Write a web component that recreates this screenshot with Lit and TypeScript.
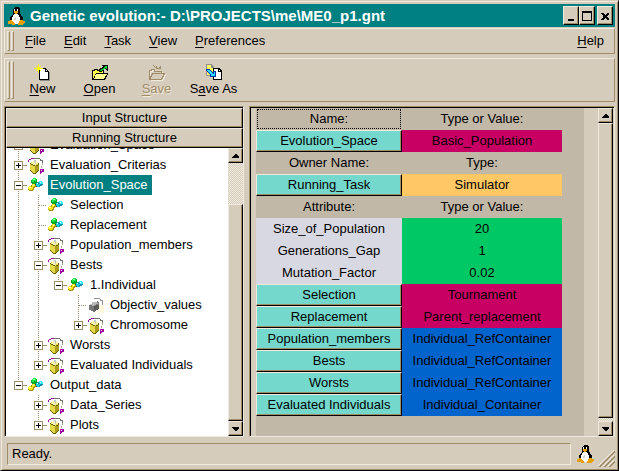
import { LitElement, html, css, svg, nothing } from "lit";
import { customElement, property } from "lit/decorators.js";
import { classMap } from "lit/directives/class-map.js";
import { styleMap } from "lit/directives/style-map.js";

type IconName = "cubes" | "container" | "object" | "new" | "open" | "save" | "saveas" | "penguin";

const prism = (top: string, left: string, right: string, line: string) => svg`
  <path d="M4 5H5V4H9V5H10V6H11V13H10V14H9V15H8V16H5V15H4V14H3V13H2V6H3V5Z" fill="${left}"/>
  <path d="M7 9H8V8H10V7H11V13H10V14H9V15H8V16H7Z" fill="${right}"/>
  <path d="M4 5H5V4H9V5H10V7H8V8H5V7H3V6H4Z" fill="${top}"/>
  <path d="M2 13H3V14H4V15H5V16H8V15H9V14H10V13H11V14H10V15H9V16H8V17H5V16H4V15H3V14H2Z" fill="${line}"/>
  <path d="M2 6H3V7H2ZM3 7H5V8H3ZM5 8H7V9H5ZM8 8H10V9H8ZM10 6H11V8H10Z" fill="${line}"/>`;

const folder = (line: string, back: string, front: string, arrow: string) => svg`
  <path d="M1 16V6H3V5H7V6H13V9H17V10L14 16Z" fill="${line}"/>
  <path d="M2 14V7H4V6H6V7H12V9H5L2 15Z" fill="${back}"/>
  <path d="M5 10H16L13 15H3Z" fill="${front}"/>
  <path d="M8 6V5H9V4H11V3H12V2H11V1H17V7H16V6H15V5H13V6H12V7H11V8H8Z" fill="${line}"/>
  <path d="M9 6H10V5H12V4H13V3H14V2H16V5H15V4H14V5H13V6H11V7H9Z" fill="${arrow}"/>`;

const ICONS: Record<IconName, { w: number; h: number; art: unknown }> = {
  cubes: {
    w: 16, h: 16,
    art: svg`
      <path d="M4 2H5V1H8V2H9V6H8V7H4V6H3V3H4Z" fill="#00a828"/>
      <path d="M4 2H5V1H8V4H6V5H4Z" fill="#18e848"/>
      <path d="M5 2H7V3H5Z" fill="#90ffa0"/>
      <path d="M8 6H9V5H11V4H14V5H15V8H14V9H12V10H9V9H8Z" fill="#1090a8"/>
      <path d="M8 6H10V7H12V8H11V10H9V9H8Z" fill="#18c8e0"/>
      <path d="M11 4H14V5H15V7H12V6H11Z" fill="#38f0ff"/>
      <path d="M12 5H13V6H12ZM9 6H10V7H9Z" fill="#fff"/>
      <path d="M4 7H7V8H8V10H7V11H6V13H5V14H1V13H0V10H1V9H3V8H4Z" fill="#a89400"/>
      <path d="M4 7H7V9H6V10H4Z" fill="#ffe820"/>
      <path d="M1 9H3V10H5V12H4V13H1V12H0V10H1Z" fill="#f8e818"/>
      <path d="M1 10H3V11H1ZM5 8H6V9H5Z" fill="#ffffb0"/>
      <path d="M7 7H8V8H7ZM8 9H9V10H8Z" fill="#403818"/>`,
  },
  container: {
    w: 17, h: 17,
    art: svg`
      <path d="M6 1H12V2H13V3H15V6H14V4H12V2H6Z" fill="#707070"/>
      <path d="M6 2H11V5H14V9H11V5H6Z" fill="#fff"/>
      <path d="M0 3H1V2H3V1H6V2H3V3H1V5H0Z" fill="#900090"/>
      ${prism("#f8f4b0", "#e4d848", "#a89c18", "#686000")}
      <path d="M6 3H8V7H7V5H6Z" fill="#c8c8c8"/>
      <path d="M14 6H15V8H14ZM13 9H14V11H13Z" fill="#b0a890"/>
      <path d="M12 12H16V15H14V16H13V17H12V12ZM13 13V14H14V13Z" fill="#a000a0"/>`,
  },
  object: {
    w: 17, h: 17,
    art: svg`
      <path d="M6 1H12V2H13V3H15V6H14V4H12V2H6Z" fill="#909090"/>
      <path d="M11 8H16V16H9V14H11Z" fill="#fff8dc"/>
      <path d="M4 5H9V4H10V5H11V12H10V13H8V14H7V15H5V14H3V13H1V8H2V7H4Z" fill="#787878"/>
      <path d="M4 5H9V6H10V7H8V8H6V9H4V8H2V7H4Z" fill="#b8b8b8"/>
      <path d="M6 9H8V8H11V12H10V13H8V14H6Z" fill="#585858"/>
      <path d="M14 6H15V8H14Z" fill="#909090"/>`,
  },
  new: {
    w: 18, h: 17,
    art: svg`
      <path d="M5 4H12V5H13V6H14V7H15V16H5Z" fill="#000"/>
      <path d="M6 5H11V8H14V15H6Z" fill="#fff"/>
      <path d="M12 6H13V7H12Z" fill="#fff"/>
      <path d="M15 8H16V17H6V16H15Z" fill="#8a8a8a"/>
      <path d="M4 0H5V4H9V5H5V9H4V5H0V4H4Z" fill="#ff0"/>
      <path d="M2 2H3V3H2ZM6 2H7V3H6ZM2 6H3V7H2ZM6 6H7V7H6ZM3 3H6V6H3Z" fill="#ff0"/>`,
  },
  open: { w: 18, h: 17, art: folder("#000", "#ffff50", "#ffff90", "#00d040") },
  save: {
    w: 18, h: 17,
    art: svg`
      <g fill="none" stroke="#f0eade"><path d="M2.5 15.5V7.5H4.5V6.5H7.5M14.5 7.5V10.5H17.5L14.5 16.5H2.5"/></g>
      <g fill="none" stroke="#a08c68"><path d="M1.5 15.5V6.5H3.5V5.5H6.5V7.5H13.5V9.5M1.5 15.5L4.5 9.5H16.5L13.5 15.5H1.5M5.5 1.5L8.5 4.5V1.5M8.5 4.5H12.5V1.5M9.5 5.5L12.5 2.5"/></g>`,
  },
  saveas: {
    w: 18, h: 17,
    art: svg`
      <path d="M1 0H6L9 3V12H1Z" fill="#909090"/>
      <path d="M2 1H6V4H8V11H2Z" fill="#ffff60"/>
      <path d="M8 4H14L17 7V16H8Z" fill="#000"/>
      <path d="M9 5H13V8H16V15H9Z" fill="#fff"/>
      <path d="M14 6H15V7H14Z" fill="#fff"/>
      <path d="M1 5H4L8 9V7H11V13H5V11H6L1 7Z" fill="#0030a8"/>
      <path d="M2 6H4L8 10H9V8H10V12H6V11H7L2 7Z" fill="#30d8ff"/>`,
  },
  penguin: {
    w: 17, h: 20,
    art: svg`
      <path d="M6 2L7 1H10L12 3V7L15 12V16L12 18H5L2 16V12L5 8V3Z" fill="#000"/>
      <path d="M6 8H10L12 12V16L10 18H7L4 15V12Z" fill="#fff"/>
      <path d="M7 11H8V14H6V12Z" fill="#d4d4d4"/>
      <path d="M6 3H7V5H6ZM9 3H10V5H9Z" fill="#fff"/>
      <path d="M6 5H10V7H9V8H7V7H6Z" fill="#e8a000"/>
      <path d="M0 15H2V14H4L7 18V19H4V18H0Z" fill="#e8a000"/>
      <path d="M10 18L12 14H15V15H17V17L14 19H10Z" fill="#e8a000"/>`,
  },
};

@customElement("pixel-icon")
class PixelIcon extends LitElement {
  @property() name: IconName = "cubes";

  static styles = css`
    :host { display: block; flex: none; }
    svg { display: block; shape-rendering: crispEdges; }
  `;

  render() {
    const { w, h, art } = ICONS[this.name];
    return html`<svg width=${w} height=${h} viewBox="0 0 ${w} ${h}" aria-hidden="true">${art}</svg>`;
  }
}

@customElement("scroll-strip")
class ScrollStrip extends LitElement {
  @property({ type: Number }) before = 0;
  @property({ type: Number }) thumb = 1;
  @property({ type: Number }) after = 0;

  static styles = css`
    :host { display: flex; flex-direction: column; flex: none; width: 15px; }
    .arrow, .thumb {
      box-sizing: border-box;
      width: 15px;
      background: #d6ccbc;
      border: 1px solid;
      border-color: #f0eade #000 #000 #f0eade;
      box-shadow: inset -1px -1px #a08c68;
    }
    .arrow { height: 15px; padding: 0; display: grid; place-items: center; flex: none; }
    .arrow svg { display: block; shape-rendering: crispEdges; }
    .track { background: repeating-conic-gradient(#f0eade 0 25%, #d6ccbc 0 50%) 0 0 / 2px 2px; }
  `;

  render() {
    const grow = (n: number) => styleMap({ flex: `${n} 1 0` });
    return html`
      <button class="arrow" aria-label="Scroll up"><svg width="7" height="4"><path d="M3 0H4L7 3V4H0V3Z"/></svg></button>
      <div class="track" style=${grow(this.before)}></div>
      <div class="thumb" style=${grow(this.thumb)}></div>
      <div class="track" style=${grow(this.after)}></div>
      <button class="arrow" aria-label="Scroll down"><svg width="7" height="4"><path d="M0 0H7V1L4 4H3L0 1Z"/></svg></button>
    `;
  }
}

interface TreeNode {
  label: string;
  icon: IconName;
  closed?: boolean;
  selected?: boolean;
  children?: TreeNode[];
}

const TREE: TreeNode[] = [
  { label: "Evaluation_Space", icon: "container", closed: true },
  { label: "Evaluation_Criterias", icon: "container", closed: true },
  {
    label: "Evolution_Space", icon: "cubes", selected: true,
    children: [
      { label: "Selection", icon: "cubes" },
      { label: "Replacement", icon: "cubes" },
      { label: "Population_members", icon: "container", closed: true },
      {
        label: "Bests", icon: "container",
        children: [
          {
            label: "1.Individual", icon: "cubes",
            children: [
              { label: "Objectiv_values", icon: "object" },
              { label: "Chromosome", icon: "container", closed: true },
            ],
          },
        ],
      },
      { label: "Worsts", icon: "container", closed: true },
      { label: "Evaluated Individuals", icon: "container", closed: true },
    ],
  },
  {
    label: "Output_data", icon: "cubes",
    children: [
      { label: "Data_Series", icon: "container", closed: true },
      { label: "Plots", icon: "container", closed: true },
    ],
  },
];

@customElement("structure-tree")
class StructureTree extends LitElement {
  static styles = css`
    :host { display: block; flex: 1; min-width: 0; overflow: hidden; background: #fff; }
    .scrolled { margin: -13px 0 0; padding: 0 0 0 2px; }
    ul { list-style: none; margin: 0; padding: 0; }
    .row { display: flex; align-items: center; height: 20px; }
    .cell {
      flex: none;
      width: 20px;
      height: 20px;
      display: flex;
      align-items: center;
      background-repeat: no-repeat;
    }
    .line { background-image: repeating-linear-gradient(#a08c68 0 1px, #fff 1px 2px); background-size: 1px 100%; background-position: 10px 0; }
    .last { background-size: 1px 10px; }
    .cell.stub::after {
      content: "";
      width: 8px;
      height: 1px;
      margin-left: 11px;
      background: repeating-linear-gradient(90deg, #a08c68 0 1px, #fff 1px 2px);
    }
    .cell.fold::after { content: ""; width: 4px; height: 1px; background: #a08c68; }
    .box {
      box-sizing: border-box;
      width: 9px;
      height: 9px;
      padding: 0;
      margin-left: 6px;
      border: 1px solid #a08c68;
      background:
        linear-gradient(#000, #000) center / 5px 1px no-repeat,
        #fff;
    }
    .box.closed {
      background:
        linear-gradient(#000, #000) center / 5px 1px no-repeat,
        linear-gradient(#000, #000) center / 1px 5px no-repeat,
        #fff;
    }
    pixel-icon { width: 20px; }
    .label { line-height: 20px; padding: 0 4px 0 2px; white-space: nowrap; }
    .label.selected { background: #008080; color: #fff; }
  `;

  private branch(nodes: TreeNode[], trail: boolean[]): unknown {
    return nodes.map((node, i) => {
      const last = i === nodes.length - 1;
      const expandable = !!node.children || !!node.closed;
      return html`
        <li role="treeitem" aria-expanded=${expandable ? String(!node.closed) : nothing}>
          <div class="row">
            ${trail.map((on) => html`<span class="cell ${classMap({ line: on })}"></span>`)}
            <span class="cell line ${classMap({ last, stub: !expandable, fold: expandable })}">
              ${expandable
                ? html`<button class="box ${classMap({ closed: !!node.closed })}" aria-label="Toggle ${node.label}"></button>`
                : nothing}
            </span>
            <pixel-icon name=${node.icon}></pixel-icon>
            <span class="label ${classMap({ selected: !!node.selected })}">${node.label}</span>
          </div>
          ${node.children ? html`<ul role="group">${this.branch(node.children, [...trail, !last])}</ul>` : nothing}
        </li>`;
    });
  }

  render() {
    return html`<ul class="scrolled" role="tree">${this.branch(TREE, [])}</ul>`;
  }
}

type Kind = "head" | "link" | "plain";
interface Row { kind: Kind; name: string; value: string; tone?: string; focus?: boolean }

const ROWS: Row[] = [
  { kind: "head", name: "Name:", value: "Type or Value:", focus: true },
  { kind: "link", name: "Evolution_Space", value: "Basic_Population", tone: "magenta" },
  { kind: "head", name: "Owner Name:", value: "Type:" },
  { kind: "link", name: "Running_Task", value: "Simulator", tone: "orange" },
  { kind: "head", name: "Attribute:", value: "Type or Value:" },
  { kind: "plain", name: "Size_of_Population", value: "20", tone: "green" },
  { kind: "plain", name: "Generations_Gap", value: "1", tone: "green" },
  { kind: "plain", name: "Mutation_Factor", value: "0.02", tone: "green" },
  { kind: "link", name: "Selection", value: "Tournament", tone: "magenta" },
  { kind: "link", name: "Replacement", value: "Parent_replacement", tone: "magenta" },
  { kind: "link", name: "Population_members", value: "Individual_RefContainer", tone: "blue" },
  { kind: "link", name: "Bests", value: "Individual_RefContainer", tone: "blue" },
  { kind: "link", name: "Worsts", value: "Individual_RefContainer", tone: "blue" },
  { kind: "link", name: "Evaluated Individuals", value: "Individual_Container", tone: "blue" },
];

@customElement("attribute-sheet")
class AttributeSheet extends LitElement {
  static styles = css`
    :host { display: block; flex: 1; min-width: 0; background: #c2b8a8; }
    table { border-collapse: collapse; table-layout: fixed; width: 306px; }
    .names { width: 146px; }
    th, td { height: 22px; padding: 0; font-weight: normal; text-align: center; white-space: nowrap; line-height: 20px; }
    .focus { outline: 1px dotted #000; outline-offset: -2px; }
    .plain { background: #d8d8e2; }
    .magenta { background: #c80064; }
    .orange { background: #ffc864; }
    .green { background: #00c864; }
    .blue { background: #0064cc; }
    .link {
      display: block;
      box-sizing: border-box;
      width: 100%;
      height: 22px;
      padding: 0;
      font: inherit;
      line-height: 20px;
      color: #000;
      background: #74d8cc;
      border: 1px solid;
      border-color: #f0eade #000 #000 #f0eade;
      box-shadow: inset -1px -1px #a08c68;
    }
  `;

  render() {
    return html`
      <table>
        <colgroup><col class="names"><col></colgroup>
        ${ROWS.map((r) =>
          r.kind === "head"
            ? html`<tr><th scope="col" class=${classMap({ focus: !!r.focus })}>${r.name}</th><th scope="col">${r.value}</th></tr>`
            : html`<tr>
                <th scope="row" class=${classMap({ plain: r.kind === "plain" })}>
                  ${r.kind === "link" ? html`<button class="link">${r.name}</button>` : r.name}
                </th>
                <td class=${r.tone ?? ""}>${r.value}</td>
              </tr>`
        )}
      </table>`;
  }
}

/** Splits a caption around its accelerator letter and underlines it. */
const accel = (text: string, at = 0) =>
  html`${text.slice(0, at)}<span class="accel">${text[at]}</span>${text.slice(at + 1)}`;

@customElement("app-root")
class AppRoot extends LitElement {
  static styles = css`
    :host { display: block; font: 13px "Liberation Sans", Arial, sans-serif; color: #000; }
    button { font: inherit; color: inherit; }
    .window {
      box-sizing: border-box;
      min-height: 100vh;
      display: flex;
      flex-direction: column;
      padding: 3px;
      background: #d6ccbc;
      border: 1px solid;
      border-color: #d6ccbc #000 #000 #d6ccbc;
      box-shadow: inset 1px 1px #f0eade, inset -1px -1px #a08c68;
    }
    .title {
      display: flex;
      align-items: center;
      height: 23px;
      margin-bottom: 1px;
      padding: 0 2px 0 4px;
      background: #008080;
      color: #fff;
    }
    .title h1 { flex: 1; margin: 0 0 0 5px; font-size: 15px; line-height: 20px; white-space: nowrap; overflow: hidden; }
    .sys {
      box-sizing: border-box;
      width: 16px;
      height: 19px;
      padding: 0;
      background: #d6ccbc;
      border: 1px solid;
      border-color: #f0eade #000 #000 #f0eade;
      box-shadow: inset -1px -1px #a08c68;
    }
    .sys svg { display: block; margin: auto; shape-rendering: crispEdges; }
    .close { margin-left: 2px; }
    .bar {
      box-sizing: border-box;
      display: flex;
      align-items: center;
      padding: 0 4px 0 2px;
      margin-bottom: 4px;
      border: 1px solid;
      border-color: #f0eade #a08c68 #a08c68 #f0eade;
    }
    .menu { height: 26px; }
    .tools { height: 44px; }
    .grip { display: flex; gap: 1px; align-self: stretch; margin: 2px 0; }
    .grip::before, .grip::after {
      content: "";
      width: 1px;
      border: 1px solid;
      border-color: #f0eade #a08c68 #a08c68 #f0eade;
    }
    .menu button { padding: 0 9px; border: 0; background: none; line-height: 20px; }
    .menu .first { margin-left: 2px; }
    .menu .help { margin-left: auto; padding: 0 6px; }
    .accel { text-decoration: underline; text-underline-offset: 2px; }
    .tool {
      width: 57px;
      padding: 0;
      border: 0;
      background: none;
      display: flex;
      flex-direction: column;
      align-items: center;
      line-height: 15px;
      white-space: nowrap;
    }
    .disabled { color: #a08c68; text-shadow: 1px 1px #f0eade; }
    .panes { flex: 1; display: grid; grid-template-columns: 240px minmax(0, 1fr); gap: 5px; }
    .pane {
      min-width: 0;
      display: flex;
      border: 1px solid;
      border-color: #a08c68 #f0eade #f0eade #a08c68;
    }
    .inner { flex: 1; min-width: 0; display: flex; border: solid #000; border-width: 1px 0 0 1px; }
    .side { flex-direction: column; }
    .tab {
      flex: none;
      box-sizing: border-box;
      height: 20px;
      padding: 0;
      line-height: 18px;
      background: #d6ccbc;
      border: 1px solid;
      border-color: #f0eade #000 #000 #f0eade;
      box-shadow: inset -1px -1px #a08c68;
    }
    .body { flex: 1; display: flex; }
    .sheet { padding: 0 1px 0 5px; gap: 14px; }
    .status { display: flex; align-items: center; margin-top: 3px; height: 27px; padding-left: 3px; }
    .message {
      flex: 1;
      margin-right: 6px;
      padding: 0 4px;
      line-height: 20px;
      border: 1px solid;
      border-color: #a08c68 #f0eade #f0eade #a08c68;
    }
    .corner { align-self: flex-end; margin-left: 4px; display: block; }
  `;

  render() {
    return html`
      <main class="window">
        <header class="title">
          <pixel-icon name="penguin"></pixel-icon>
          <h1>Genetic evolution:- D:\\PROJECTS\\me\\ME0_p1.gnt</h1>
          <button class="sys" aria-label="Minimize"><svg width="12" height="12"><path d="M3 9H9V11H3Z"/></svg></button>
          <button class="sys" aria-label="Maximize"><svg width="12" height="12"><path d="M1 1H11V11H1ZM2 3V10H10V3Z" fill-rule="evenodd"/></svg></button>
          <button class="sys close" aria-label="Close"><svg width="12" height="12"><path d="M2 3H4L6 5L8 3H10V4L8 6V7L10 9V10H8L6 8L4 10H2V9L4 7V6L2 4Z"/></svg></button>
        </header>

        <nav class="bar menu">
          <span class="grip"></span>
          <button class="first">${accel("File")}</button>
          <button>${accel("Edit")}</button>
          <button>${accel("Task")}</button>
          <button>${accel("View")}</button>
          <button>${accel("Preferences")}</button>
          <button class="help">${accel("Help")}</button>
        </nav>

        <div class="bar tools" role="toolbar">
          <span class="grip"></span>
          <button class="tool"><pixel-icon name="new"></pixel-icon><span>${accel("New")}</span></button>
          <button class="tool"><pixel-icon name="open"></pixel-icon><span>${accel("Open")}</span></button>
          <button class="tool disabled" disabled><pixel-icon name="save"></pixel-icon><span>${accel("Save")}</span></button>
          <button class="tool"><pixel-icon name="saveas"></pixel-icon><span>${accel("Save As", 1)}</span></button>
        </div>

        <div class="panes">
          <section class="pane">
            <div class="inner side">
              <button class="tab">Input Structure</button>
              <button class="tab">Running Structure</button>
              <div class="body">
                <structure-tree></structure-tree>
                <scroll-strip before="41" thumb="216"></scroll-strip>
              </div>
            </div>
          </section>
          <section class="pane">
            <div class="inner sheet">
              <attribute-sheet></attribute-sheet>
              <scroll-strip thumb="294" after="3"></scroll-strip>
            </div>
          </section>
        </div>

        <footer class="status">
          <div class="message">Ready.</div>
          <pixel-icon name="penguin"></pixel-icon>
          <svg class="corner" width="17" height="17" aria-hidden="true">
            <path d="M0 16L16 0M5 16L16 5M10 16L16 10" stroke="#f0eade" fill="none"/>
            <path d="M1 17L17 1M2 17L17 2M6 17L17 6M7 17L17 7M11 17L17 11M12 17L17 12" stroke="#a08c68" fill="none"/>
          </svg>
        </footer>
      </main>
    `;
  }
}
